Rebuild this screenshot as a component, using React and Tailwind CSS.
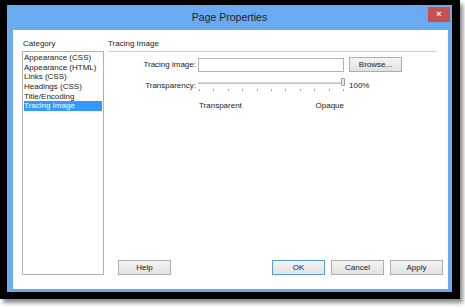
export default function App() {
  const font = { fontFamily: '"Liberation Sans", Arial, sans-serif' };
  const items = [
    "Appearance (CSS)",
    "Appearance (HTML)",
    "Links (CSS)",
    "Headings (CSS)",
    "Title/Encoding",
    "Tracing Image",
  ];
  const ticks = Array.from({ length: 11 });
  const btn =
    "w-[53px] h-[15px] flex items-center justify-center text-[8px] text-[#1a1a1a] border border-[#adadad] bg-gradient-to-b from-[#f4f4f4] to-[#e2e2e2]";
  return (
    <div className="w-[465px] h-[308px] bg-white overflow-hidden" style={font}>
      <div className="w-[460px] h-[299px] bg-black pt-[5px] pl-[7px] pr-[8px] pb-[7px] shadow-[3px_4px_4px_rgba(0,0,0,0.45)]">
        <div className="w-[445px] h-[287px] bg-[#6aaaf0] flex flex-col">
          <div className="relative h-[25px] flex items-center justify-center">
            <span className="text-[10.5px] text-[#222] mt-[1px]">Page Properties</span>
            <div className="absolute right-[2px] top-[2px] w-[22px] h-[15px] bg-[#c9504f] flex items-center justify-center">
              <span className="text-white text-[9px] font-bold leading-none">×</span>
            </div>
          </div>
          <div className="ml-[6px] mr-[4px] mb-[3px] h-[259px] bg-white flex pl-[9px] pt-[8px] text-[8px] text-[#1a1a1a]">
            <div className="w-[82px] flex flex-col">
              <div className="h-[12px] leading-[12px] pl-[1px] mb-[1px]">Category</div>
              <div className="h-[224px] border border-[#b2b2b2] pt-[1px] px-[1px]">
                {items.map((t) =>
                  t === "Tracing Image" ? (
                    <div key={t} className="h-[9.7px] leading-[9.7px] bg-[#3399ff] text-white">{t}</div>
                  ) : (
                    <div key={t} className="h-[9.7px] leading-[9.7px]">{t}</div>
                  )
                )}
              </div>
            </div>
            <div className="ml-[4px] w-[335px] h-[237px] flex flex-col">
              <div className="mr-[6px] h-[14px] leading-[12px] border-b border-[#cfcfcf]">Tracing Image</div>
              <div className="flex items-center mt-[5px] h-[15px]">
                <div className="w-[88px] text-right">Tracing image:</div>
                <div className="ml-[2px] w-[146px] h-[14px] border border-[#b5b5b5] bg-white"></div>
                <div className={btn + " ml-[5px]"}>Browse...</div>
              </div>
              <div className="flex items-start mt-[6px] h-[16px]">
                <div className="w-[88px] text-right mt-[2px]">Transparency:</div>
                <div className="ml-[2px] w-[148px] flex flex-col">
                  <div className="relative h-[9px] flex items-center">
                    <div className="w-[145px] h-[2px] bg-[#d9d9d9] border-b border-[#c4c4c4]"></div>
                    <div className="absolute left-[143px] top-[0px] w-[4px] h-[8px] rounded-[1px] border border-[#9a9a9a] bg-[#ececec]"></div>
                  </div>
                  <div className="flex justify-between w-[146px] pl-[1px] mt-[2px]">
                    {ticks.map((_, i) => (
                      <div key={i} className="w-[1px] h-[2px] bg-[#a8a8a8]"></div>
                    ))}
                  </div>
                </div>
                <div className="ml-[3px] mt-[2px]">100%</div>
              </div>
              <div className="flex mt-[6px] ml-[91px] w-[145px] justify-between">
                <span>Transparent</span>
                <span>Opaque</span>
              </div>
              <div className="mt-auto flex items-center">
                <div className={btn + " ml-[10px]"}>Help</div>
                <div className="ml-auto flex gap-[6px]">
                  <div className="w-[53px] h-[15px] flex items-center justify-center text-[8px] text-[#1a1a1a] border border-[#5a9ddd] bg-gradient-to-b from-[#f4f4f4] to-[#e2e2e2]">OK</div>
                  <div className={btn}>Cancel</div>
                  <div className={btn}>Apply</div>
                </div>
              </div>
            </div>
          </div>
        </div>
      </div>
    </div>
  );
}
